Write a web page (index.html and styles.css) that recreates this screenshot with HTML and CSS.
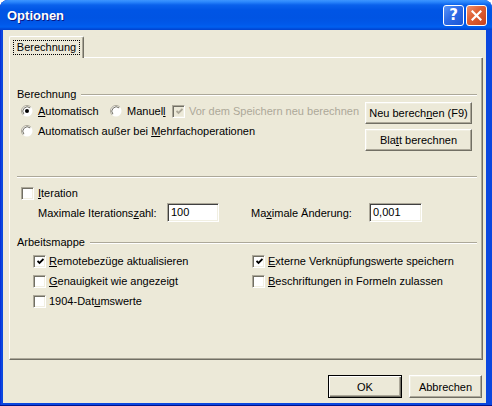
FILE: index.html
```html
<!DOCTYPE html>
<html lang="de">
<head>
<meta charset="utf-8">
<title>Optionen</title>
<link rel="stylesheet" href="styles.css">
</head>
<body>
<div class="window">
  <div class="titlebar">
    <span class="title">Optionen</span>
    <div class="tbtns">
      <span class="tb help">?</span>
      <span class="tb close"><svg width="11" height="11" viewBox="0 0 11 11"><path d="M1.5 1.5 L9.5 9.5 M9.5 1.5 L1.5 9.5" stroke="#fff" stroke-width="2.2" stroke-linecap="square"/></svg></span>
    </div>
  </div>
  <div class="body">
    <div class="tabstrip">
      <div class="tab"><span class="tab-label">Berechnung</span></div>
      <div class="tab-fill"></div>
    </div>
    <div class="panel">
      <div class="group-head g1"><span>Berechnung</span><i class="rule"></i></div>
      <div class="calc">
        <div class="calc-left">
          <div class="row">
            <div class="opt w89"><svg class="radio" width="12" height="12" viewBox="0 0 12 12"><circle cx="6" cy="6" r="5.5" fill="#fff"/><path d="M2.1 9.9 A5.5 5.5 0 0 1 9.9 2.1" stroke="#ACA899" fill="none"/><path d="M2.9 9.1 A4.4 4.4 0 0 1 9.1 2.9" stroke="#716F64" fill="none"/><circle cx="6" cy="6" r="2" fill="#000"/></svg><span><u>A</u>utomatisch</span></div>
            <div class="opt w62"><svg class="radio" width="12" height="12" viewBox="0 0 12 12"><circle cx="6" cy="6" r="5.5" fill="#fff"/><path d="M2.1 9.9 A5.5 5.5 0 0 1 9.9 2.1" stroke="#ACA899" fill="none"/><path d="M2.9 9.1 A4.4 4.4 0 0 1 9.1 2.9" stroke="#716F64" fill="none"/></svg><span>Manuel<u>l</u></span></div>
            <div class="opt cbopt disabled"><span class="cb off"><svg width="7" height="7" viewBox="0 0 7 7"><path d="M0.5 3 L2.5 5 L6.5 1" stroke="#ACA899" stroke-width="1.8" fill="none"/></svg></span><span>Vor dem Speichern neu berechnen</span></div>
          </div>
          <div class="row">
            <div class="opt"><svg class="radio" width="12" height="12" viewBox="0 0 12 12"><circle cx="6" cy="6" r="5.5" fill="#fff"/><path d="M2.1 9.9 A5.5 5.5 0 0 1 9.9 2.1" stroke="#ACA899" fill="none"/><path d="M2.9 9.1 A4.4 4.4 0 0 1 9.1 2.9" stroke="#716F64" fill="none"/></svg><span>Automatisch außer bei <u>M</u>ehrfachoperationen</span></div>
          </div>
        </div>
        <div class="calc-right">
          <div class="btn wide">Neu berech<u>n</u>en (F9)</div>
          <div class="btn wide">Bla<u>t</u>t berechnen</div>
        </div>
      </div>
      <div class="sep"></div>
      <div class="iter">
        <div class="opt cbopt"><span class="cb"></span><span><u>I</u>teration</span></div>
      </div>
      <div class="maxrow">
        <span class="lbl l1">Maximale Iterations<u>z</u>ahl:</span>
        <span class="field f1">100</span>
        <span class="lbl l2">Ma<u>x</u>imale Änderung:</span>
        <span class="field f2">0,001</span>
      </div>
      <div class="group-head g2"><span>Arbeitsmappe</span><i class="rule"></i></div>
      <div class="wb">
        <div class="opt cbopt2"><span class="cb"><svg width="7" height="7" viewBox="0 0 7 7"><path d="M0.5 3 L2.5 5 L6.5 1" stroke="#000" stroke-width="1.8" fill="none"/></svg></span><span><u>R</u>emotebezüge aktualisieren</span></div>
        <div class="opt cbopt2"><span class="cb"><svg width="7" height="7" viewBox="0 0 7 7"><path d="M0.5 3 L2.5 5 L6.5 1" stroke="#000" stroke-width="1.8" fill="none"/></svg></span><span><u>E</u>xterne Verknüpfungswerte speichern</span></div>
        <div class="opt cbopt2"><span class="cb"></span><span><u>G</u>enauigkeit wie angezeigt</span></div>
        <div class="opt cbopt2"><span class="cb"></span><span><u>B</u>eschriftungen in Formeln zulassen</span></div>
        <div class="opt cbopt2"><span class="cb"></span><span>1904-Dat<u>u</u>mswerte</span></div>
      </div>
    </div>
    <div class="actions">
      <div class="btn default">OK</div>
      <div class="btn cancel">Abbrechen</div>
    </div>
  </div>
</div>
</body>
</html>
```

FILE: styles.css
```css
html, body {
  margin: 0;
  padding: 0;
  background: #fff;
}
body {
  font-family: "Liberation Sans", Arial, sans-serif;
  font-size: 11px;
  color: #000;
}
u { text-decoration: underline; text-underline-offset: 1px; }

.window {
  width: 492px;
  height: 406px;
  display: flex;
  flex-direction: column;
  background: #0A47DF;
  border-radius: 8px 8px 0 0;
  overflow: hidden;
  box-shadow: inset 0 -1px #00138C, inset 1px 0 #0831D9;
}

.titlebar {
  height: 30px;
  flex: none;
  display: flex;
  align-items: flex-start;
  padding: 0 5px 0 7px;
  background: linear-gradient(180deg, #3D95FF 0px, #2A86FC 2px, #0A61EC 5px, #0055E5 10px, #0054E3 18px, #0058EA 24px, #0060F0 27px, #0049D8 29px, #0043CF 30px);
}
.title {
  flex: 1;
  color: #fff;
  font-weight: bold;
  font-size: 13px;
  line-height: 16px;
  padding-top: 8px;
  text-shadow: 1px 1px #0A1883;
}
.tbtns {
  display: flex;
  gap: 2px;
  margin-top: 5px;
}
.tb {
  width: 21px;
  height: 21px;
  box-sizing: border-box;
  border: 1px solid #fff;
  border-radius: 3px;
  display: flex;
  align-items: center;
  justify-content: center;
}
.help {
  background: linear-gradient(135deg, #5A95F8 0%, #2E6BE6 45%, #1B57D6 100%);
  color: #fff;
  font-family: "DejaVu Sans", sans-serif;
  font-weight: bold;
  font-size: 15px;
  line-height: 19px;
}
.close {
  background: linear-gradient(135deg, #F0906C 0%, #E06236 40%, #C8421C 100%);
}

.body {
  flex: 1;
  margin: 0 6px 3px 3px;
  background: #ECE9D8;
  padding: 6px 0 0 6px;
  display: flex;
  flex-direction: column;
}

.tabstrip {
  display: flex;
  width: 474px;
  height: 22px;
}
.tab {
  width: 75px;
  height: 22px;
  box-sizing: border-box;
  border-top: 1px solid #fff;
  border-left: 1px solid #fff;
  border-right: 1px solid #716F64;
  box-shadow: inset -1px 0 #ACA899;
  border-radius: 2px 2px 0 0;
  padding: 3px 0 0 3px;
}
.tab-label {
  width: 67px;
  height: 15px;
  box-sizing: border-box;
  border: 1px dotted #000;
  display: flex;
  align-items: center;
  justify-content: center;
  line-height: 13px;
}
.tab-fill {
  flex: 1;
  border-bottom: 1px solid #fff;
  margin-right: 1px;
}

.panel {
  width: 474px;
  height: 302px;
  box-sizing: border-box;
  border-left: 1px solid #fff;
  border-right: 1px solid #716F64;
  border-bottom: 1px solid #716F64;
  box-shadow: inset -1px -1px #ACA899;
  display: flex;
  flex-direction: column;
}

.group-head {
  display: flex;
  height: 14px;
  line-height: 14px;
  margin: 0 5px 0 7px;
}
.g1 { margin-top: 29px; }
.g2 { margin-top: 13px; }
.rule {
  flex: 1;
  height: 1px;
  margin: 7px 0 0 5px;
  border-top: 1px solid #ACA899;
  border-bottom: 1px solid #fff;
  height: 0;
}

.calc {
  display: flex;
  height: 50px;
}
.calc-left {
  flex: 1;
  padding-left: 11px;
}
.row {
  display: flex;
  height: 20px;
}
.opt {
  display: flex;
  align-items: center;
  height: 20px;
  white-space: nowrap;
}
.radio { flex: none; margin-right: 5px; }
.w89 { width: 89px; }
.w62 { width: 62px; }
.cbopt .cb { margin-right: 4px; }
.cbopt2 .cb { margin-right: 3px; }
.disabled { color: #ACA899; }

.cb {
  width: 13px;
  height: 13px;
  flex: none;
  box-sizing: border-box;
  border: 1px solid;
  border-color: #ACA899 #fff #fff #ACA899;
  box-shadow: inset 1px 1px #716F64, inset -1px -1px #F1EFE2;
  background: #fff;
  display: flex;
  align-items: center;
  justify-content: center;
}
.cb svg { display: block; margin: 1px 0 0 1px; }
.cb.off { background: #ECE9D8; }

.calc-right {
  width: 107px;
  margin: 1px 10px 0 0;
  display: flex;
  flex-direction: column;
  gap: 5px;
}

.btn {
  box-sizing: border-box;
  height: 23px;
  border: 1px solid;
  border-color: #fff #716F64 #716F64 #fff;
  box-shadow: inset -1px -1px #ACA899, inset 1px 1px #F1EFE2;
  background: #ECE9D8;
  display: flex;
  align-items: center;
  justify-content: center;
  white-space: nowrap;
}
.btn.wide { height: 22px; }
.btn.default {
  border: 1px solid #000;
  box-shadow: inset 1px 1px #fff, inset -1px -1px #716F64, inset -2px -2px #ACA899;
  width: 74px;
}
.btn.cancel { width: 73px; }

.sep {
  margin: 25px 5px 0 7px;
  border-top: 1px solid #ACA899;
  border-bottom: 1px solid #fff;
}
.iter {
  margin-top: 5px;
  padding-left: 11px;
  height: 20px;
  display: flex;
}
.maxrow {
  display: flex;
  align-items: center;
  height: 19px;
  padding-left: 28px;
}
.lbl { white-space: nowrap; }
.l1 { width: 129px; }
.l2 { width: 118px; margin-left: 32px; }
.field {
  height: 19px;
  box-sizing: border-box;
  background: #fff;
  border: 1px solid;
  border-color: #ACA899 #fff #fff #ACA899;
  box-shadow: inset 1px 1px #404040, inset -1px -1px #F1EFE2;
  padding-left: 3px;
  line-height: 17px;
}
.f1 { width: 52px; }
.f2 { width: 53px; }

.wb {
  margin-top: 2px;
  padding-left: 23px;
  display: grid;
  grid-template-columns: 219px auto;
  grid-auto-rows: 20px;
}

.actions {
  display: flex;
  justify-content: flex-end;
  gap: 7px;
  margin: 15px 4px 0 0;
}
```
